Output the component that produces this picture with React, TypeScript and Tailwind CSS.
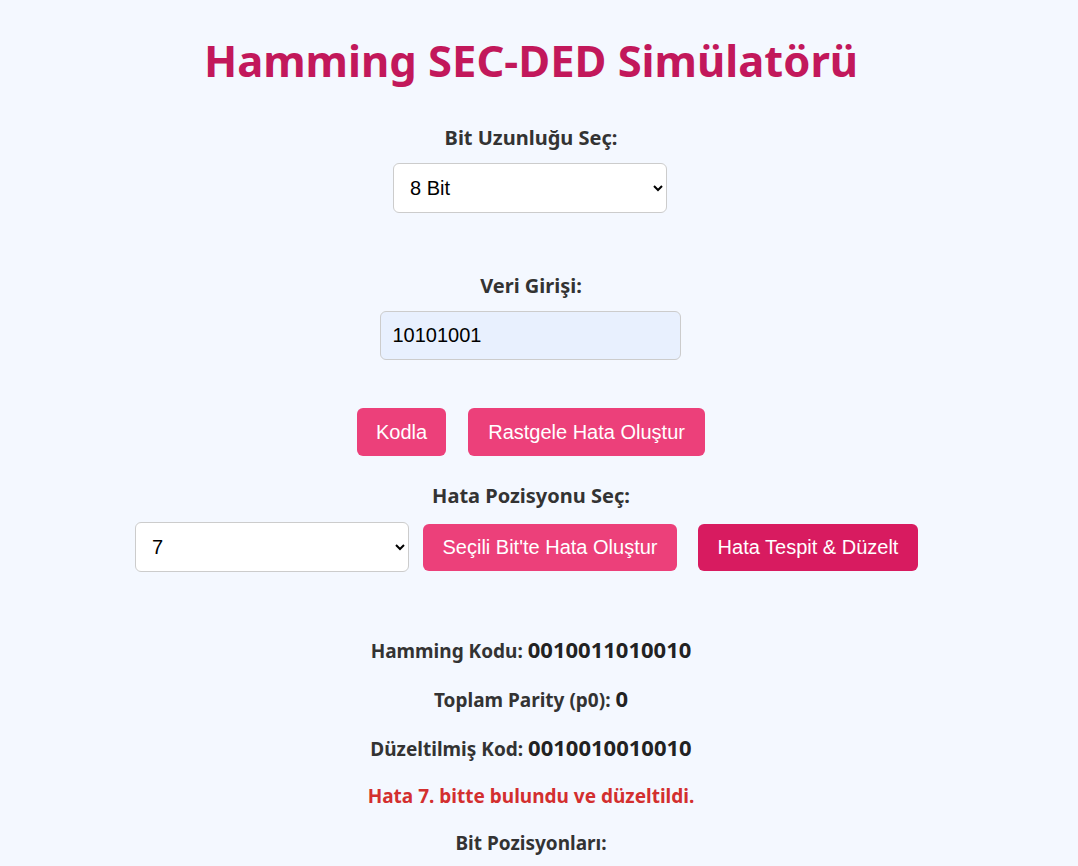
import { useState } from "react";

const SEGOE = { fontFamily: '"Noto Sans", "Open Sans", sans-serif' };
const ARIAL = { fontFamily: '"Liberation Sans", Arial, sans-serif' };

export default function App() {
  const [bits, setBits] = useState("8");
  const [data, setData] = useState("10101001");
  const [pos, setPos] = useState("7");

  return (
    <div
      className="h-[866px] overflow-hidden bg-[#f4f8ff] pr-[16px] text-[#333] text-center"
      style={SEGOE}
    >
      <h1 className="pt-[30px] text-[43.5px] leading-[60px] font-bold text-[#c2185b]">
        Hamming SEC-DED Simülatörü
      </h1>

      {/* Bit length */}
      <div className="mt-[36px] flex flex-col items-center">
        <label className="text-[20px] leading-[24px] font-bold">Bit Uzunluğu Seç:</label>
        <select
          value={bits}
          onChange={(e) => setBits(e.target.value)}
          className="mt-[13px] ml-[-2px] w-[274px] h-[50px] px-[12px] rounded-md border border-[#ccc] bg-white text-[20px] text-black"
          style={ARIAL}
        >
          <option value="4">4 Bit</option>
          <option value="8">8 Bit</option>
          <option value="16">16 Bit</option>
        </select>
      </div>

      {/* Data input */}
      <div className="mt-[61px] flex flex-col items-center">
        <label className="text-[20px] leading-[24px] font-bold">Veri Girişi:</label>
        <input
          value={data}
          onChange={(e) => setData(e.target.value)}
          className="mt-[13px] ml-[-2px] w-[301px] h-[49px] px-[12px] rounded-md border border-[#ccc] bg-[#e8f0fe] text-[20px] text-black outline-none"
          style={ARIAL}
        />
      </div>

      <div className="mt-[48px] flex justify-center gap-[22px] text-[20px] text-white" style={ARIAL}>
        <button className="h-[48px] px-[19px] rounded-md bg-[#ec407a]">Kodla</button>
        <button className="h-[48px] px-[20px] rounded-md bg-[#ec407a]">Rastgele Hata Oluştur</button>
      </div>

      <div className="mt-[28px] text-[20px] leading-[24px] font-bold">Hata Pozisyonu Seç:</div>
      <div className="mt-[14px] flex justify-center items-center pr-[9px] text-[20px]" style={ARIAL}>
        <select
          value={pos}
          onChange={(e) => setPos(e.target.value)}
          className="w-[274px] h-[50px] px-[12px] rounded-md border border-[#ccc] bg-white text-black"
        >
          {Array.from({ length: 13 }, (_, i) => (
            <option key={i} value={String(i)}>
              {i}
            </option>
          ))}
        </select>
        <button className="ml-[14px] h-[47px] w-[254px] rounded-md bg-[#ec407a] text-white">
          Seçili Bit'te Hata Oluştur
        </button>
        <button className="ml-[21px] h-[47px] w-[220px] rounded-md bg-[#d81b60] text-white">
          Hata Tespit &amp; Düzelt
        </button>
      </div>

      <div className="mt-[65px] flex flex-col gap-[23px] text-[19px] leading-[24px] font-bold">
        <p>
          Hamming Kodu: <span className="text-[22px] text-[#222]">0010011010010</span>
        </p>
        <p>
          Toplam Parity (p0): <span className="text-[22px] text-[#222]">0</span>
        </p>
        <p>
          Düzeltilmiş Kod: <span className="text-[22px] text-[#222]">0010010010010</span>
        </p>
        <p className="text-[#d32f2f]">Hata 7. bitte bulundu ve düzeltildi.</p>
        <p>Bit Pozisyonları:</p>
      </div>
    </div>
  );
}
